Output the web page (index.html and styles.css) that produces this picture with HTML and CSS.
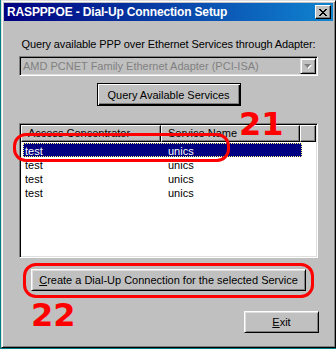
FILE: index.html
```html
<!DOCTYPE html>
<html lang="en">
<head>
  <meta charset="UTF-8">
  <title>RASPPPOE - Dial-Up Connection Setup</title>
  <link rel="stylesheet" href="styles.css">
</head>
<body>
  <div class="window">
    <!-- title bar -->
    <div class="titlebar">
      <span class="title">RASPPPOE - Dial-Up Connection Setup</span>
      <span class="close">
        <svg width="8" height="7" viewBox="0 0 8 7"><path d="M0 0h2v1h1v1h2v-1h1v-1h2v1h-1v1h-1v1h-1v1h1v1h1v1h1v1h-2v-1h-1v-1h-2v1h-1v1h-2v-1h1v-1h1v-1h1v-1h-1v-1h-1v-1h-1z" fill="#000"/></svg>
      </span>
    </div>

    <div class="content">
      <div class="label">Query available PPP over Ethernet Services through Adapter:</div>

      <div class="combo">
        <span class="combo-text">AMD PCNET Family Ethernet Adapter (PCI-ISA)</span>
        <span class="combo-btn">
          <svg width="8" height="5" viewBox="0 0 8 5"><path d="M1 1h7l-3.5 4z" fill="#fff"/><path d="M0 0h7l-3.5 4z" fill="#808080"/></svg>
        </span>
      </div>

      <div class="btn-row query-row">
        <span class="btn default query">Query Available Services</span>
      </div>

      <div class="listview">
        <div class="lv-header">
          <div class="hcol h1">Access Concentrator</div>
          <div class="hcol h2">Service Name</div>
          <div class="hcol h3"></div>
        </div>
        <div class="lv-body">
          <div class="row selected"><span class="c1">test</span><span class="c2">unics</span></div>
          <div class="row"><span class="c1">test</span><span class="c2">unics</span></div>
          <div class="row"><span class="c1">test</span><span class="c2">unics</span></div>
          <div class="row"><span class="c1">test</span><span class="c2">unics</span></div>
        </div>
      </div>

      <div class="btn-row create-row">
        <span class="btn create"><u>C</u>reate a Dial-Up Connection for the selected Service</span>
      </div>

      <div class="footer">
        <span class="btn exit"><u>E</u>xit</span>
      </div>
    </div>

    <!-- annotations -->
    <div class="ring ring-row"></div>
    <div class="ring ring-create"></div>
    <div class="mark mark-21">21</div>
    <div class="mark mark-22">22</div>
  </div>
</body>
</html>
```

FILE: styles.css
```css
/* desktop */
html, body {
  margin: 0;
  padding: 0;
  background-color: #008080;
  overflow: hidden;
}

body {
  font-family: "Liberation Sans", Arial, sans-serif;
  font-size: 11px;
  color: #000;
}

/* window frame */
.window {
  position: relative;
  box-sizing: border-box;
  width: 335px;
  height: 348px;
  margin-left: 1px;
  padding: 2px;
  background-color: #c0c0c0;
  border: 1px solid;
  border-color: #dfdfdf #000 #000 #dfdfdf;
  box-shadow: inset 1px 1px #fff, inset -1px -1px #808080;
}

.titlebar {
  height: 18px;
  display: flex;
  align-items: center;
  justify-content: space-between;
  background: linear-gradient(to right, #000080, #1084d0);
}

.title {
  padding-left: 3px;
  color: #fff;
  font-weight: bold;
  font-size: 12px;
  letter-spacing: -0.15px;
  white-space: nowrap;
}

.close {
  box-sizing: border-box;
  width: 16px;
  height: 14px;
  margin-right: 2px;
  display: flex;
  align-items: center;
  justify-content: center;
  background-color: #c0c0c0;
  border: 1px solid;
  border-color: #fff #000 #000 #fff;
  box-shadow: inset -1px -1px #808080;
}

.content {
  padding: 0 15px;
}

.label {
  margin-top: 17px;
  line-height: 13px;
  text-align: center;
  letter-spacing: -0.1px;
  white-space: nowrap;
}

/* combo box, disabled */
.combo {
  box-sizing: border-box;
  height: 20px;
  margin-top: 5px;
  display: flex;
  align-items: center;
  border: 1px solid;
  border-color: #808080 #fff #fff #808080;
  box-shadow: inset 1px 1px #000, inset -1px -1px #dfdfdf;
  padding: 1px 1px 1px 3px;
}

.combo-text {
  flex: 1;
  color: #808080;
  white-space: nowrap;
}

.combo-btn {
  box-sizing: border-box;
  width: 16px;
  height: 16px;
  display: flex;
  align-items: center;
  justify-content: center;
  border: 1px solid;
  border-color: #dfdfdf #000 #000 #dfdfdf;
  box-shadow: inset 1px 1px #fff, inset -1px -1px #808080;
}

/* push buttons */
.btn-row {
  display: flex;
  justify-content: center;
}

.btn {
  box-sizing: border-box;
  display: flex;
  align-items: center;
  justify-content: center;
  height: 22px;
  border: 1px solid;
  border-color: #fff #000 #000 #fff;
  box-shadow: inset 1px 1px #dfdfdf, inset -1px -1px #808080;
  white-space: nowrap;
}

.btn u {
  text-decoration: underline;
  text-underline-offset: 1px;
}

.btn.default {
  border-color: #000;
  box-shadow: inset 1px 1px #fff, inset -1px -1px #000, inset -2px -2px #808080;
}

.query-row {
  margin-top: 7px;
}

.query {
  width: 144px;
  height: 23px;
}

/* list view */
.listview {
  box-sizing: border-box;
  height: 135px;
  margin-top: 17px;
  background-color: #fff;
  border: 1px solid;
  border-color: #808080 #fff #fff #808080;
  box-shadow: inset 1px 1px #000, inset -1px -1px #dfdfdf;
  padding: 1px;
}

.lv-header {
  display: flex;
  height: 17px;
}

.hcol {
  box-sizing: border-box;
  height: 17px;
  line-height: 15px;
  padding-left: 6px;
  background-color: #c0c0c0;
  border: 1px solid;
  border-color: #fff #000 #000 #fff;
  box-shadow: inset -1px -1px #808080;
  white-space: nowrap;
  overflow: hidden;
}

.h1 { width: 140px; }
.h2 { width: 139px; }
.h3 { flex: 1; }

.lv-body {
  padding: 1px 0 0 2px;
}

.row {
  display: flex;
  width: 279px;
  height: 14px;
  line-height: 16px;
}

.row .c1 {
  width: 143px;
  padding-left: 2px;
}

.row.selected {
  background-color: #000080;
  color: #fff;
  outline: 1px dotted #ffff80;
  outline-offset: -1px;
}

.create-row {
  margin-top: 11px;
}

.create {
  width: 275px;
}

.footer {
  display: flex;
  justify-content: flex-end;
  margin-top: 20px;
  margin-right: -1px;
}

.exit {
  width: 75px;
}

/* red annotations */
.ring {
  position: absolute;
  box-sizing: border-box;
  border: 3px solid #f00;
  border-radius: 13px;
}

.ring-row {
  left: 11px;
  top: 132px;
  width: 217px;
  height: 29px;
}

.ring-create {
  left: 21px;
  top: 262px;
  width: 291px;
  height: 35px;
}

.mark {
  position: absolute;
  color: #f00;
  font-family: "DejaVu Sans", sans-serif;
  font-weight: bold;
  font-size: 32px;
  line-height: 32px;
}

.mark-21 {
  left: 237px;
  top: 107px;
}

.mark-22 {
  left: 29px;
  top: 298px;
}
```
